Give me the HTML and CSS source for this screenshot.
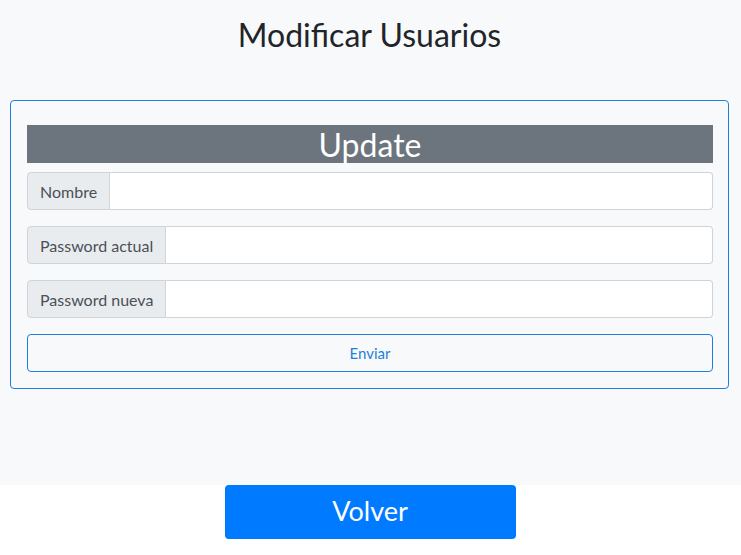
FILE: index.html
```html
<!DOCTYPE html>
<html lang="es">
<head>
<meta charset="utf-8">
<title>Modificar Usuarios</title>
<link rel="stylesheet" href="styles.css">
</head>
<body>
<div class="page">
  <h2 class="title">Modificar Usuarios</h2>
  <div class="card">
    <div class="card-head">Update</div>
    <div class="group first">
      <span class="prepend">Nombre</span>
      <input class="field" type="text">
    </div>
    <div class="group">
      <span class="prepend">Password actual</span>
      <input class="field" type="password">
    </div>
    <div class="group">
      <span class="prepend">Password nueva</span>
      <input class="field" type="password">
    </div>
    <button class="send" type="button">Enviar</button>
  </div>
</div>
<div class="footer">
  <button class="back" type="button">Volver</button>
</div>
</body>
</html>
```

FILE: styles.css
```css
html, body {
  margin: 0;
  padding: 0;
  background: #ffffff;
  font-family: Lato, "Open Sans", "Liberation Sans", sans-serif;
}
.page {
  background: #f8f9fa;
  height: 485px;
  padding: 14px 12px 0 10px;
  box-sizing: border-box;
}
.title {
  margin: 0 0 44px 0;
  text-align: center;
  font-weight: 400;
  font-size: 32px;
  line-height: 42px;
  color: #212529;
}
.card {
  border: 1px solid #1f7fdc;
  border-radius: 4px;
  padding: 24px 15px 16px 16px;
  display: flex;
  flex-direction: column;
}
.card-head {
  background: #6c757d;
  color: #ffffff;
  text-align: center;
  font-size: 32px;
  line-height: 40px;
  height: 38px;
}
.group {
  display: flex;
  height: 38px;
  margin-top: 16px;
}
.group.first {
  margin-top: 9px;
}
.prepend {
  display: flex;
  align-items: center;
  padding: 0 12px;
  background: #e9ecef;
  border: 1px solid #ced4da;
  border-radius: 4px 0 0 4px;
  color: #495057;
  font-size: 16px;
  white-space: nowrap;
}
.field {
  flex: 1;
  min-width: 0;
  border: 1px solid #ced4da;
  border-left: none;
  border-radius: 0 4px 4px 0;
  background: #ffffff;
  margin: 0;
  padding: 0 12px;
  font: inherit;
  outline: none;
}
.send {
  margin-top: 16px;
  height: 38px;
  background: transparent;
  border: 1px solid #1f7fdc;
  border-radius: 4px;
  color: #1f7fdc;
  font-family: inherit;
  font-size: 15px;
}
.footer {
  display: flex;
  justify-content: center;
  padding-right: 1px;
}
.back {
  width: 291px;
  height: 54px;
  padding: 0 0 3px 0;
  background: #007bff;
  color: #ffffff;
  border: none;
  border-radius: 4px;
  font-family: inherit;
  font-size: 27px;
}
```
